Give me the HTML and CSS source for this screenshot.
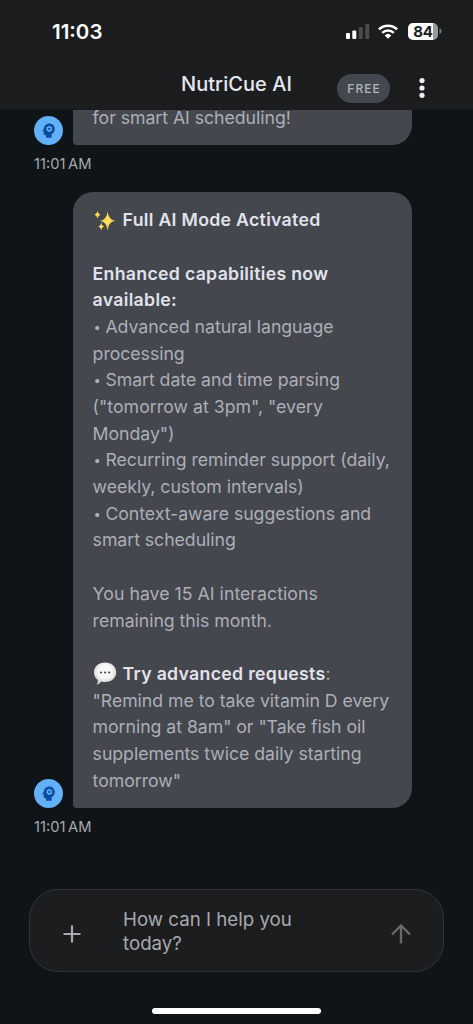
FILE: index.html
```html
<!DOCTYPE html>
<html lang="en">
<head>
<meta charset="utf-8">
<title>NutriCue AI</title>
<link rel="stylesheet" href="styles.css">
</head>
<body>
<svg class="defs" width="0" height="0" aria-hidden="true">
  <symbol id="mind" viewBox="0 0 24 24">
    <path d="M13 8.57c-.79 0-1.43.64-1.43 1.43s.64 1.43 1.43 1.43 1.43-.64 1.43-1.43-.64-1.43-1.43-1.43z"/>
    <path d="M13 3C9.25 3 6.2 5.94 6.02 9.64L4.1 12.2c-.25.33-.01.8.4.8H6v3c0 1.1.9 2 2 2h1v3h7v-4.68c2.36-1.12 4-3.53 4-6.32 0-3.87-3.13-7-7-7zm3 7c0 .13-.01.26-.02.39l.83.66c.08.06.1.16.05.25l-.8 1.39c-.05.09-.16.12-.24.09l-.99-.4c-.21.16-.43.29-.67.39L14 13.83c-.01.1-.1.17-.2.17h-1.6c-.1 0-.18-.07-.2-.17l-.15-1.06c-.25-.1-.47-.23-.68-.39l-.99.4c-.09.03-.2 0-.25-.09l-.8-1.39c-.05-.08-.03-.19.05-.25l.84-.66c-.01-.13-.02-.26-.02-.39s.02-.27.04-.39l-.85-.66c-.08-.06-.1-.16-.05-.26l.8-1.38c.05-.09.15-.12.24-.09l1 .4c.2-.15.43-.29.67-.39L12 6.17c.02-.1.1-.17.2-.17h1.6c.1 0 .18.07.2.17l.15 1.06c.24.1.46.23.67.39l1-.4c.09-.03.2 0 .24.09l.8 1.38c.05.09.03.2-.05.26l-.85.66c.03.12.04.25.04.39z"/>
  </symbol>
</svg>
<div class="screen">
  <header class="top">
    <div class="status">
      <span class="clock">11:03</span>
      <div class="indicators">
        <svg class="signal" width="24" height="16" viewBox="0 0 24 16">
          <rect x="0" y="10" width="4" height="6" rx="1" fill="#fff"/>
          <rect x="6.3" y="7.5" width="4" height="8.5" rx="1" fill="#fff"/>
          <rect x="12.8" y="4" width="4" height="12" rx="1" fill="#4b4c4e"/>
          <rect x="19.3" y="1" width="4" height="15" rx="1" fill="#4b4c4e"/>
        </svg>
        <svg class="wifi" width="20" height="15" viewBox="0 0 20 15">
          <g fill="none" stroke="#fff" stroke-width="2.5">
            <path d="M0.9 5.4a13 13 0 0 1 18.2 0"/>
            <path d="M4.2 8.8a8.4 8.4 0 0 1 11.6 0"/>
          </g>
          <path d="M6.7 11.4a4.8 4.8 0 0 1 6.6 0L10 14.8z" fill="#fff"/>
        </svg>
        <div class="battery">
          <span class="level">84</span>
          <svg width="3" height="6" viewBox="0 0 3 6"><path d="M0.5 0Q2.6 0.8 2.6 3T0.5 6z" fill="#77787a"/></svg>
        </div>
      </div>
    </div>
    <div class="titlebar">
      <h1 class="title">NutriCue AI</h1>
      <span class="plan">FREE</span>
      <svg class="more" width="6" height="20" viewBox="0 0 6 20" fill="#eeeef2">
        <circle cx="3" cy="2.6" r="2.6"/><circle cx="3" cy="10" r="2.6"/><circle cx="3" cy="17.3" r="2.6"/>
      </svg>
    </div>
  </header>
  <main class="chat">
    <section class="message">
      <div class="row">
        <div class="avatar"><svg width="19" height="19"><use href="#mind"/></svg></div>
        <div class="bubble clipped"><p class="line">for smart AI scheduling!</p></div>
      </div>
      <time class="stamp">11:01<span> AM</span></time>
    </section>
    <section class="message">
      <div class="row">
        <div class="avatar"><svg width="19" height="19"><use href="#mind"/></svg></div>
        <div class="bubble">
          <p class="line head"><svg class="emoji" width="25" height="22" viewBox="0 0 25 22">
            <defs><linearGradient id="gold" x1="0" y1="0" x2="1" y2="1"><stop offset="0" stop-color="#f0a93a"/><stop offset=".5" stop-color="#ffe45c"/><stop offset="1" stop-color="#f0a33a"/></linearGradient></defs>
            <g fill="url(#gold)"><path d="M14.6 1.2Q15.5 9.9 22.4 10.8Q15.5 11.7 14.6 20.4Q13.7 11.7 6.8 10.8Q13.7 9.9 14.6 1.2z"/><path d="M4.6.8Q5.2 4.2 7.7 4.8Q5.2 5.4 4.6 8.8Q4 5.4 1.5 4.8Q4 4.2 4.6.8z"/><path d="M8.2 12.6Q8.8 16 11.4 16.6Q8.8 17.2 8.2 20.8Q7.6 17.2 5 16.6Q7.6 16 8.2 12.6z"/></g>
          </svg><b>Full AI Mode Activated</b></p>
          <p class="line">&nbsp;</p>
          <p class="line"><b>Enhanced capabilities now</b></p>
          <p class="line"><b>available:</b></p>
          <p class="line"><span class="dot">•</span>Advanced natural language</p>
          <p class="line">processing</p>
          <p class="line"><span class="dot">•</span>Smart date and time parsing</p>
          <p class="line quoted">("tomorrow at 3pm", "every</p>
          <p class="line">Monday")</p>
          <p class="line"><span class="dot">•</span>Recurring reminder support (daily,</p>
          <p class="line">weekly, custom intervals)</p>
          <p class="line"><span class="dot">•</span>Context-aware suggestions and</p>
          <p class="line">smart scheduling</p>
          <p class="line">&nbsp;</p>
          <p class="line quoted">You have 15 AI interactions</p>
          <p class="line">remaining this month.</p>
          <p class="line">&nbsp;</p>
          <p class="line head"><svg class="emoji" width="25" height="24" viewBox="0 0 25 24">
            <defs><radialGradient id="puff" cx=".5" cy=".4" r=".6"><stop offset=".5" stop-color="#f7f7f7"/><stop offset="1" stop-color="#c9cac9"/></radialGradient></defs>
            <path d="M12.2 .6C18.6 .6 23.2 4.6 23.2 10.3S18.6 20 12.2 20Q10 20 8.4 19.5Q6.4 22.2 3.3 22.7Q5 20.7 4.8 18Q1 15.2 1 10.3C1 4.6 5.6 .6 12.2 .6z" fill="url(#puff)"/>
            <g fill="#38393a"><circle cx="8" cy="10.5" r="1"/><circle cx="12.1" cy="10.5" r="1"/><circle cx="16.2" cy="10.5" r="1"/></g>
          </svg><span><b>Try advanced requests</b>:</span></p>
          <p class="line">"Remind me to take vitamin D every</p>
          <p class="line">morning at 8am" or "Take fish oil</p>
          <p class="line">supplements twice daily starting</p>
          <p class="line">tomorrow"</p>
        </div>
      </div>
      <time class="stamp">11:01<span> AM</span></time>
    </section>
  </main>
  <footer class="bottom">
    <div class="composer">
      <svg class="plus" width="18" height="18" viewBox="0 0 18 18"><path d="M9 .5v17M.5 9h17" stroke="#a9a9ae" stroke-width="2.2" fill="none"/></svg>
      <p class="prompt">How can I help you<br>today?</p>
      <svg class="send" width="20" height="20" viewBox="0 0 20 20"><path d="M10 19.5V2M1 10.5L10 1.5l9 9" stroke="#68696b" stroke-width="2.4" fill="none"/></svg>
    </div>
    <div class="home"></div>
  </footer>
</div>
</body>
</html>
```

FILE: styles.css
```css
* { box-sizing: border-box; }
body { margin: 0; background: #0f1418; font-family: Inter, "Liberation Sans", sans-serif; }
h1, p { margin: 0; }
.defs { display: block; }
.screen { width: 473px; height: 1024px; display: flex; flex-direction: column; overflow: hidden; background: #0f1418; }
.top { height: 110px; flex: none; background: #1c1d1f; border-bottom: 1px solid #181a1c; }
.status { height: 62px; display: flex; justify-content: space-between; padding: 0 31px 0 52px; align-items: center; }
.clock { color: #fff; font-size: 20.5px; font-weight: 600; letter-spacing: 0; line-height: 24px; padding-top: 1px; }
.indicators { display: flex; align-items: center; }
.signal { margin-right: 8.5px; }
.wifi { margin-right: 10px; }
.battery { display: flex; align-items: center; gap: 1px; }
.level { width: 30px; height: 17px; border-radius: 5px; background: linear-gradient(90deg, #fff 84%, #97989a 84%); color: #1c1d1f; font-size: 15px; font-weight: 700; line-height: 17px; text-align: center; letter-spacing: -.3px; }
.titlebar { display: grid; grid-template-columns: 181px 156px 53px 29px 6px; height: 47px; align-items: center; padding-bottom: 4px; }
.title { grid-column: 2; color: #e7e7ee; font-size: 20px; line-height: 24px; font-weight: 500; letter-spacing: .05px; white-space: nowrap; }
.plan { margin-top: 9px; height: 29px; border-radius: 15px; background: #434850; color: #b4b6bd; font-size: 12px; font-weight: 500; letter-spacing: 1px; line-height: 29px; text-align: center; padding-left: 1px; }
.more { grid-column: 5; margin-top: 9px; }
.chat { flex: 1; min-height: 0; padding-left: 34px; overflow: hidden; }
.row { display: flex; align-items: flex-end; gap: 10px; }
.avatar { width: 29px; height: 29px; border-radius: 50%; background: #62b0f6; color: #0c4aa0; fill: currentColor; display: flex; align-items: center; justify-content: center; }
.avatar svg { display: block; }
.bubble { width: 339px; height: 616px; padding: 15.7px 0 0 19.6px; background: #44474e; border-radius: 20px 20px 20px 4px; color: #adaeb7; }
.bubble.clipped { height: 35px; padding-top: 0; border-radius: 0 0 20px 4px; }
.bubble.clipped .line { height: 16px; line-height: 16px; }
.line { height: 26.7px; line-height: 26.7px; font-size: 17.7px; letter-spacing: -0.04px; white-space: nowrap; }
.line.quoted { letter-spacing: 0.03px; }
.line b { color: #e2e2ec; font-weight: 600; letter-spacing: 0.3px; }
.dot { display: inline-block; width: 12.8px; font-size: 13px; padding-left: 1px; position: relative; top: -1px; }
.head { display: flex; align-items: center; gap: 5px; }
.stamp { display: block; height: 46.5px; padding-top: 9px; color: #a7a8ac; font-size: 14.7px; line-height: 20px; }
.stamp span { margin-left: -1.5px; }
.bottom { height: 135px; flex: none; padding: 0 29px; }
.composer { height: 83px; border: 1.5px solid #323335; border-radius: 29px; background: #1c1d1f; display: grid; grid-template-columns: 93px 1fr 20px; align-items: center; padding: 0 32px 0 0; }
.plus { margin: 7px 0 0 32.5px; }
.prompt { color: #a9a9ae; font-size: 18.7px; line-height: 24px; padding-top: 3px; white-space: nowrap; }
.send { margin-top: 7px; }
.home { width: 169px; height: 6px; border-radius: 3px; background: #fff; margin: 36px auto 0; }
```
